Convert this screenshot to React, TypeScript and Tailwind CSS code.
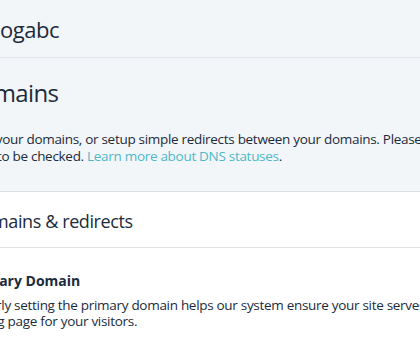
export default function App() {
  return (
    <div className="w-[420px] h-[338px] overflow-hidden bg-white text-[#1b2b3c] font-['Open_Sans',sans-serif]">
      {/* Site header + page intro */}
      <div className="bg-[#f3f6f9] border-b border-[#dcdfe3]">
        <div className="h-[58px] border-b border-[#e1e6ec] flex items-center">
          <div className="-ml-[18px] text-[22px] leading-[28px] tracking-[-0.5px] whitespace-nowrap">blogabc</div>
        </div>
        <div className="pt-[19px] pb-[26px]">
          <h1 className="-ml-[37px] text-[24px] leading-[32px] tracking-[-0.6px] whitespace-nowrap">Domains</h1>
          <div className="mt-[22px] -ml-[56px] text-[13.5px] leading-[17px] tracking-[-0.3px] whitespace-nowrap">
            <div>Manage your domains, or setup simple redirects between your domains. Please note that DNS</div>
            <div>
              changes to be checked.{" "}
              <a className="text-[#4db8c8]">Learn more about DNS statuses</a>.
            </div>
          </div>
        </div>
      </div>

      {/* Domains & redirects card */}
      <div className="h-[56px] border-b border-[#e2e2e2] flex items-center">
        <h2 className="-ml-[31px] mt-[3px] text-[18px] leading-[24px] tracking-[-0.4px] whitespace-nowrap">Domains &amp; redirects</h2>
      </div>
      <div className="pt-[23px] whitespace-nowrap">
        <h3 className="-ml-[34px] text-[14px] font-bold leading-[20px]">Primary Domain</h3>
        <div className="mt-[6px] text-[13.5px] leading-[16px] tracking-[-0.3px]">
          <div className="-ml-[40px]">Properly setting the primary domain helps our system ensure your site serves the correct</div>
          <div className="-ml-[40px]">landing page for your visitors.</div>
        </div>
      </div>
    </div>
  );
}
